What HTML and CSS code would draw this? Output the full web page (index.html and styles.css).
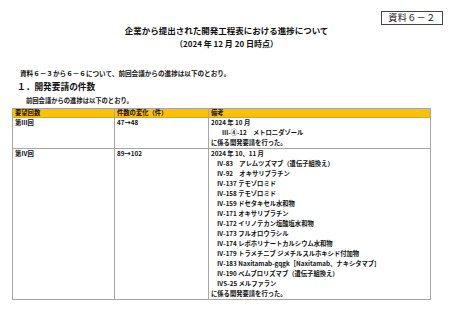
FILE: index.html
```html
<!DOCTYPE html>
<html lang="ja">
<head>
    <meta charset="UTF-8">
    <meta name="viewport" content="width=device-width, initial-scale=1.0">
    <title>開発工程表における進捗</title>
    <link rel="stylesheet" href="styles.css">
</head>
<body>
    <div class="page">
        <div class="doc-no"><span class="tag">資料６－２</span></div>
        <h1 class="title">企業から提出された開発工程表における進捗について</h1>
        <p class="date">（2024 年 12 月 20 日時点）</p>

        <p class="lead">資料６－３から６－６について、前回会議からの進捗は以下のとおり。</p>
        <h2 class="section">１．開発要請の件数</h2>
        <p class="note">前回会議からの進捗は以下のとおり。</p>

        <table class="progress">
            <thead>
                <tr>
                    <th class="col-round">要望回数</th>
                    <th class="col-count">件数の変化（件）</th>
                    <th class="col-memo">備考</th>
                </tr>
            </thead>
            <tbody>
                <tr>
                    <td>第Ⅲ回</td>
                    <td>47→48</td>
                    <td>
                        <div>2024 年 10 月</div>
                        <div class="item item-wide">Ⅲ-④-12　メトロニダゾール</div>
                        <div>に係る開発要請を行った。</div>
                    </td>
                </tr>
                <tr>
                    <td>第Ⅳ回</td>
                    <td>89→102</td>
                    <td>
                        <div>2024 年 10、11 月</div>
                        <div class="item">Ⅳ-83　アレムツズマブ（遺伝子組換え）</div>
                        <div class="item">Ⅳ-92　オキサリプラチン</div>
                        <div class="item">Ⅳ-137 テモゾロミド</div>
                        <div class="item">Ⅳ-158 テモゾロミド</div>
                        <div class="item">Ⅳ-159 ドセタキセル水和物</div>
                        <div class="item">Ⅳ-171 オキサリプラチン</div>
                        <div class="item">Ⅳ-172 イリノテカン塩酸塩水和物</div>
                        <div class="item">Ⅳ-173 フルオロウラシル</div>
                        <div class="item">Ⅳ-174 レボホリナートカルシウム水和物</div>
                        <div class="item">Ⅳ-179 トラメチニブ ジメチルスルホキシド付加物</div>
                        <div class="item">Ⅳ-183 Naxitamab-gqgk［Naxitamab、ナキシタマブ］</div>
                        <div class="item">Ⅳ-190 ベムブロリズマブ（遺伝子組換え）</div>
                        <div class="item">ⅣS-25 メルファラン</div>
                        <div>に係る開発要請を行った。</div>
                    </td>
                </tr>
            </tbody>
        </table>
    </div>
</body>
</html>
```

FILE: styles.css
```css
* {
    margin: 0;
    padding: 0;
    box-sizing: border-box;
}

body {
    background: #fff;
    color: #111;
    font-family: "Noto Sans CJK JP", "Liberation Sans", sans-serif;
}

.page {
    width: 453px;
    padding-top: 11px;
}

.doc-no {
    display: flex;
    justify-content: flex-end;
    padding-right: 10px;
}

.tag {
    display: block;
    width: 62px;
    height: 14px;
    border: 1px solid #444;
    font-size: 9px;
    line-height: 12px;
    text-align: center;
    letter-spacing: 0.5px;
}

.title {
    font-size: 8.5px;
    font-weight: bold;
    line-height: 10px;
    text-align: center;
}

.date {
    margin-top: 4px;
    font-size: 8px;
    font-weight: bold;
    line-height: 10px;
    text-align: center;
}

.lead {
    margin-top: 19px;
    padding-left: 20px;
    font-size: 6.6px;
    font-weight: bold;
    line-height: 10px;
}

.section {
    margin-top: 4px;
    padding-left: 17px;
    font-size: 8.7px;
    font-weight: bold;
    line-height: 10px;
}

.note {
    margin-top: 4px;
    padding-left: 26px;
    font-size: 6.3px;
    font-weight: bold;
    line-height: 10px;
}

.progress {
    margin: 2px 0 0 12px;
    width: 419px;
    border-collapse: collapse;
    font-size: 6.3px;
    line-height: 10px;
}

.progress th,
.progress td {
    border: 1px solid #a6a6a6;
    padding: 0 2px;
    text-align: left;
    vertical-align: top;
}

.progress th {
    background: #ffc000;
    font-weight: bold;
    line-height: 8px;
}

.progress td {
    font-weight: bold;
}

.col-round {
    width: 102px;
}

.col-count {
    width: 94px;
}

.item {
    padding-left: 6px;
    white-space: pre;
}

.item-wide {
    padding-left: 11px;
}
```
